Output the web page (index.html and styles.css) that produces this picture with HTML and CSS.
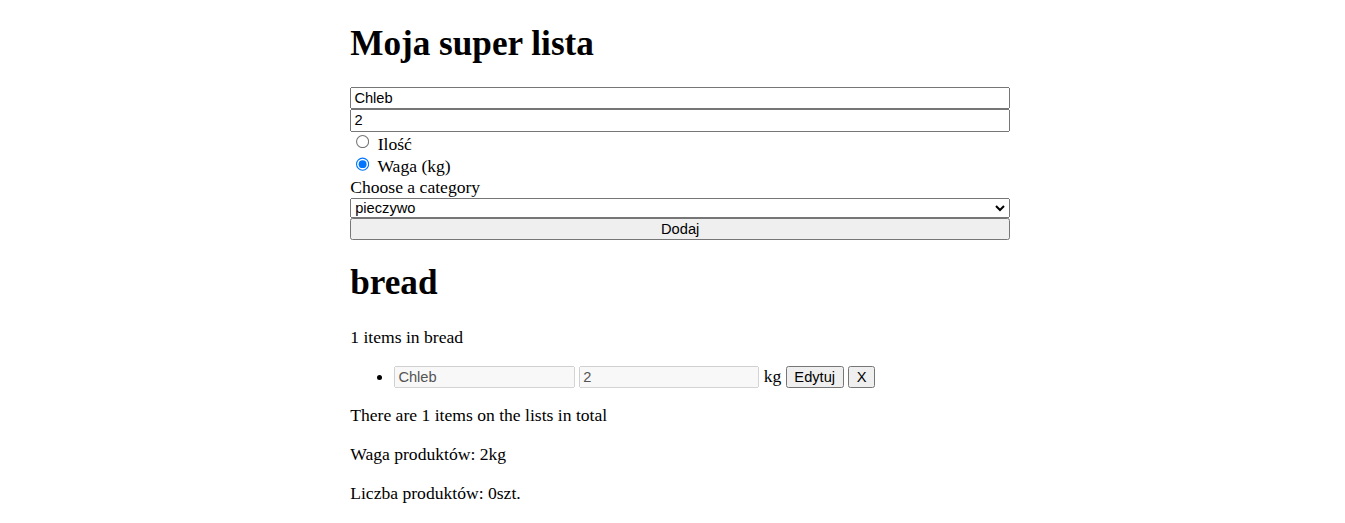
FILE: index.html
```html
<!DOCTYPE html>
<html lang="pl">
<head>
<meta charset="utf-8">
<title>Moja super lista</title>
<link rel="stylesheet" href="styles.css">
</head>
<body>
<div class="app">
  <h1 class="title">Moja super lista</h1>
  <form class="form">
    <input class="field" type="text" value="Chleb">
    <input class="field" type="text" value="2">
    <div class="radio-row"><input class="radio" type="radio" name="unit" id="qty"> <label for="qty">Ilość</label></div>
    <div class="radio-row"><input class="radio" type="radio" name="unit" id="kg" checked> <label for="kg">Waga (kg)</label></div>
    <label class="cat-label" for="cat">Choose a category</label>
    <select class="field select" id="cat">
      <option>pieczywo</option>
    </select>
    <button class="field submit" type="button">Dodaj</button>
  </form>
  <h1>bread</h1>
  <p>1 items in bread</p>
  <ul>
    <li><input class="item-input" type="text" value="Chleb" disabled> <input class="item-input" type="text" value="2" disabled> kg <button class="btn" type="button">Edytuj</button> <button class="btn" type="button">X</button></li>
  </ul>
  <p>There are 1 items on the lists in total</p>
  <p>Waga produktów: 2kg</p>
  <p>Liczba produktów: 0szt.</p>
</div>
</body>
</html>
```

FILE: styles.css
```css
html {
  zoom: 1.1;
}
body {
  margin: 0;
  padding-left: 14px;
  font-family: "Liberation Serif", "Times New Roman", serif;
  font-size: 16px;
  color: #000;
  background: #fff;
}
.app {
  width: 600px;
  margin: 0 auto;
}
.form {
  display: flex;
  flex-direction: column;
}
.field {
  display: block;
  width: 100%;
  box-sizing: border-box;
  margin: 0;
  font-family: "Liberation Sans", Arial, sans-serif;
  font-size: 13.333px;
}
.cat-label {
  display: block;
}
.item-input {
  width: 164px;
  box-sizing: border-box;
  font-family: "Liberation Sans", Arial, sans-serif;
  font-size: 13.333px;
}
.btn {
  font-family: "Liberation Sans", Arial, sans-serif;
  font-size: 13.333px;
}
```
